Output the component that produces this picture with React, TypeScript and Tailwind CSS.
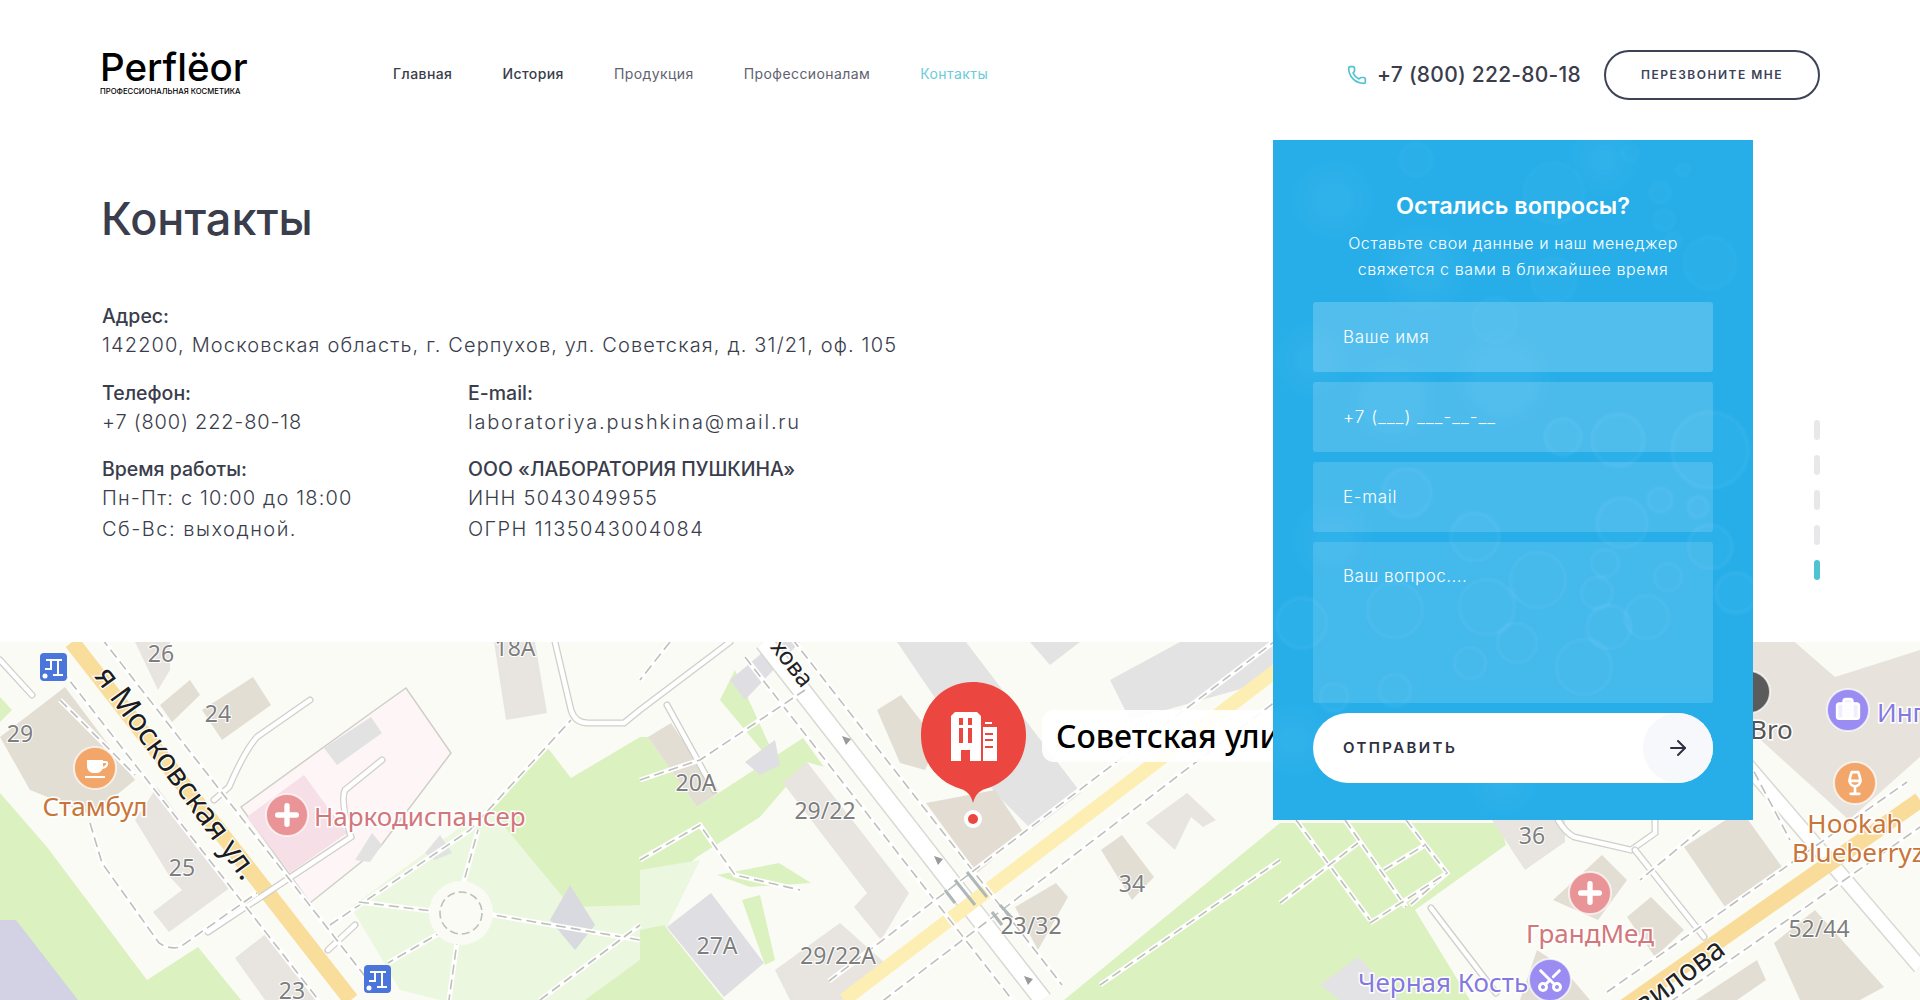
import React from 'react';
import { ArrowRight, Briefcase, Phone, Plus, Scissors, Wine } from 'lucide-react';

const navItems = [
  { label: 'Главная', cls: 'text-[#3a3d4b] font-medium' },
  { label: 'История', cls: 'text-[#3a3d4b] font-medium' },
  { label: 'Продукция', cls: 'text-[#5f6270]' },
  { label: 'Профессионалам', cls: 'text-[#5f6270]' },
  { label: 'Контакты', cls: 'text-[#6ccbd8]' },
];

// [x, y, r] in panel coordinates
const bubbles = [
  [437, 310, 38], [349, 383, 25], [265, 440, 28], [214, 467, 28], [122, 470, 28], [29, 483, 25],
  [332, 423, 14], [425, 367, 10], [395, 437, 14], [324, 453, 16], [336, 487, 22], [374, 477, 22],
  [244, 503, 20], [311, 527, 28], [197, 523, 16], [122, 550, 16], [61, 557, 14], [437, 407, 22],
  [387, 360, 12], [290, 297, 18], [345, 300, 26], [202, 397, 24], [134, 353, 24], [463, 453, 20],
];

const topBubbles = [
  [437, 123, 26], [281, 53, 30], [387, 53, 10], [357, 13, 8], [391, 80, 10], [281, 140, 22],
  [222, 180, 22], [143, 20, 16], [410, 30, 6], [400, 100, 7],
];

const blotches = [
  [60, 60, 30], [150, 130, 34], [40, 220, 28], [120, 260, 36], [60, 400, 30], [330, 20, 24], [230, 240, 40], [20, 600, 26], [230, 640, 24],
];

const buildings: [string, string][] = [
  ['0,737 65,687 135,780 92,815 30,790', '#e3ded4'],
  ['135,642 170,642 170,670 158,690', '#e8e5e0'],
  ['160,705 190,680 200,695 172,722', '#e3ded4'],
  ['202,710 253,677 271,705 222,740', '#e3ded4'],
  ['135,820 157,787 231,887 169,932 153,912 182,890 170,877', '#e8e5e0'],
  ['235,958 267,933 322,1000 265,1000', '#e8e5e0'],
  ['494,642 535,642 547,713 506,720', '#e8e5e0'],
  ['877,710 901,695 938,743 925,770 900,763', '#e3ded4'],
  ['926,803 995,790 1024,833 977,873', '#e3dcd2'],
  ['783,783 807,762 909,893 893,920 881,940 854,907 867,893', '#e8e5e0'],
  ['648,737 671,723 718,793 697,807', '#e3ded4'],
  ['667,927 711,893 764,963 724,997', '#dfdfe3'],
  ['775,970 840,923 885,963 855,1000 790,1000', '#e8e5e0'],
  ['1101,850 1122,835 1154,877 1132,900', '#e3ded4'],
  ['1015,907 1056,883 1068,897 1038,950', '#e3ded4'],
  ['1146,823 1187,793 1216,820 1203,827 1191,817 1175,850', '#e8e5e0'],
  ['1492,820 1565,820 1565,842 1525,870', '#e8e5e0'],
  ['1553,900 1602,855 1627,880 1598,920', '#e3ded4'],
  ['1627,917 1651,897 1684,930 1655,957', '#e3ded4'],
  ['1684,847 1741,810 1782,867 1725,907', '#e3ded4'],
  ['1774,943 1815,910 1884,987 1860,1000 1800,1000', '#e3ded4'],
  ['1696,1000 1757,960 1766,980 1737,1000', '#e3ded4'],
  ['1537,950 1560,965 1590,1000 1520,1000', '#e3ded4'],
  ['1753,642 1795,642 1835,677 1920,650 1920,757 1849,820 1753,733', '#e7e3dc'],
  ['730,680 775,642 800,642 745,700', '#dfdfe3'],
  ['745,762 775,740 780,765 760,775', '#dfdfe3'],
];

const dashed = [
  'M92 626L371 984', 'M52 658L331 1016', 'M783 627L1062 985', 'M745 657L1024 1015',
  'M859 1019L1305 679', 'M829 981L1275 641', 'M1633 1028L1933 818', 'M1607 992L1907 782',
  'M90 823L102 863L159 943Q170 950 180 947L257 893',
  'M330 925L470 830L571 720', 'M359 902L440 912', 'M482 913L640 940', 'M461 892L478 830',
  'M445 930L388 963', 'M458 935L449 1000', 'M540 1000L640 925', 'M640 780L700 760L805 690',
  'M640 860L700 825L735 875L800 890', 'M670 642L640 680', 'M1296 820L1370 920', 'M1345 820L1406 907',
  'M1406 820L1447 873L1410 905', 'M1280 903L1358 843', 'M1384 870L1425 845', 'M1370 923L1447 873',
  'M1100 985L1280 860', 'M1700 830L1640 880', 'M1740 745L1790 840', 'M60 700L120 760L135 775',
];

const drives = [
  'M310 700L257 737Q245 750 229 787L214 800', 'M382 760L345 790Q340 800 351 837L208 932',
  'M555 642L571 710Q575 723 588 723L624 723L640 710L730 642', 'M1558 820Q1565 832 1574 837L1631 850L1655 833L1655 820',
  'M1635 850L1704 937', 'M1431 908L1496 993', 'M667 705L714 790', 'M0 660L32 695', 'M328 950L355 925',
];

const numbers: [string, number, number][] = [
  ['26', 161, 662], ['24', 218, 722], ['29', 20, 742], ['25', 182, 876], ['23', 292, 999], ['18А', 515, 656],
  ['20А', 696, 791], ['29/22', 825, 819], ['27А', 717, 954], ['29/22А', 838, 964], ['34', 1132, 892],
  ['23/32', 1031, 934], ['36', 1532, 844], ['52/44', 1819, 937],
];

const MapLabel = ({ x, y, color, anchor = 'middle', children }: { x: number; y: number; color: string; anchor?: 'middle' | 'start'; children: React.ReactNode }) => (
  <text x={x} y={y} fill={color} textAnchor={anchor} stroke="#fff" strokeWidth="3" className="[paint-order:stroke] font-['Noto_Sans',sans-serif] text-[26px]">
    {children}
  </text>
);

const MapDot = ({ x, y, color, children }: { x: number; y: number; color: string; children?: React.ReactNode }) => (
  <g>
    <circle cx={x} cy={y} r="21" fill={color} stroke="#fff" strokeOpacity="0.7" strokeWidth="2" />
    {children}
  </g>
);

const TransitIcon = ({ x, y }: { x: number; y: number }) => (
  <g>
    <rect x={x} y={y} width="27" height="28" rx="4" fill="#4a76dc" />
    <path d={`M${x + 6} ${y + 7}H${x + 22}M${x + 11} ${y + 7}V${y + 16}H${x + 5}M${x + 18} ${y + 7}V${y + 22}M${x + 13} ${y + 22}H${x + 23}`} stroke="#fff" strokeWidth="2" fill="none" />
    <circle cx={x + 5} cy={y + 23} r="2.5" fill="#fff" />
  </g>
);

const MapView = () => (
  <svg viewBox="0 642 1920 358" className="block h-[358px] w-[1920px]">
    <rect x="0" y="642" width="1920" height="358" fill="#fbfbf6" />
    {/* green */}
    <polygon points="0,793 47,847 147,980 198,947 241,1000 0,1000" fill="#dcf1c0" />
    <polygon points="0,697 12,710 0,722" fill="#dcf1c0" />
    <polygon points="0,920 16,920 78,1000 0,1000" fill="#d3d2e4" />
    <polygon points="351,907 488,807 571,907 640,870 640,1000 440,1000 400,990" fill="#ebf7df" />
    <polygon points="488,807 547,747 571,778 640,737 648,737 697,807 803,738 824,767 807,762 760,817 697,857 640,905 571,907" fill="#dcf1c0" />
    <polygon points="640,870 700,860 667,927 640,930" fill="#ebf7df" />
    <polygon points="640,930 664,925 724,1000 640,1000" fill="#dcf1c0" />
    <polygon points="717,875 779,863 811,883 750,887" fill="#dcf1c0" />
    <polygon points="742,900 760,895 775,960 765,965" fill="#dcf1c0" />
    <polygon points="1064,1000 1280,823 1500,823 1506,845 1415,910 1470,1000" fill="#dcf1c0" />
    <polygon points="720,700 735,670 790,790 778,770" fill="#dcf1c0" />
    <polygon points="1358,957 1400,1000 1340,1000 1320,985" fill="#e3e3e6" />
    <polygon points="585,1000 640,960 640,1000" fill="#dcf1c0" />
    {/* hospital */}
    <polygon points="241,807 375,710 406,688 451,753 380,847 310,903" fill="#fdf5f6" stroke="#cfcfca" strokeWidth="1.5" />
    <polygon points="247,817 304,775 320,797 347,833 290,873" fill="#f6dfe6" />
    <polygon points="324,748 371,717 382,733 337,765" fill="#e2e2e2" />
    <polygon points="355,860 372,833 382,845 370,862" fill="#e2e2e2" />
    <polygon points="425,853 440,835 452,853 435,860" fill="#e2e2e2" />
    <polygon points="550,920 570,885 595,925 575,950" fill="#d9d9e0" />
    <polygon points="897,642 966,642 1081,793 1032,830 995,793 950,720" fill="#e3e3e3" />
    <polygon points="1030,642 1080,642 1050,665" fill="#e3e3e3" />
    <polygon points="1110,680 1180,642 1273,642 1273,680 1130,720" fill="#e3e3e3" />
    {buildings.map(([points, fill]) => (
      <polygon key={points} points={points} fill={fill} />
    ))}
    <polygon points="1795,642 1850,642 1835,665 1825,668" fill="#fbfbf6" />
    {/* roads */}
    <path d="M764 642L1043 1000" stroke="#d8d8d4" strokeWidth="20" fill="none" />
    <path d="M764 642L1043 1000" stroke="#fff" strokeWidth="17" fill="none" />
    <path d="M1700 710L1920 967" stroke="#d8d8d4" strokeWidth="16" fill="none" />
    <path d="M1700 710L1920 967" stroke="#fff" strokeWidth="13" fill="none" />
    <path d="M72 642L351 1000" stroke="#f9dd9b" strokeWidth="16" fill="none" />
    <path d="M844 1000L1500 500" stroke="#fdeeb4" strokeWidth="14" fill="none" />
    <path d="M1620 1010L1920 800" stroke="#f9dc9a" strokeWidth="16" fill="none" />
    {drives.map((d) => (
      <g key={d}>
        <path d={d} stroke="#cfcfca" strokeWidth="7" strokeLinecap="round" fill="none" />
        <path d={d} stroke="#fff" strokeWidth="4.5" strokeLinecap="round" fill="none" />
      </g>
    ))}
    {dashed.map((d) => (
      <g key={d}>
        <path d={d} stroke="#fff" strokeWidth="5" fill="none" />
        <path d={d} stroke="#bfc0bc" strokeWidth="1.6" strokeDasharray="10 5" fill="none" />
      </g>
    ))}
    <circle cx="461" cy="913" r="32" fill="#fbfbf6" />
    <circle cx="461" cy="913" r="21" fill="#fbfbf6" stroke="#bfc0bc" strokeWidth="1.6" strokeDasharray="8 4" />
    {/* crossings */}
    <path d="M955 880L975 905M967 872L987 897M992 912L1002 925M1000 905L1012 918M945 890L955 903" stroke="#aeb8b8" strokeWidth="3" fill="none" />
    <path d="M846 745l-4 -9l9 3zM938 865l-4 -9l9 3zM1028 985l-4 -9l9 3z" fill="#9a9a9a" />
    {/* labels */}
    {numbers.map(([t, x, y]) => (
      <text key={t} x={x} y={y} textAnchor="middle" fill="#7e7e7e" stroke="#fff" strokeWidth="2" className="[paint-order:stroke] font-['Noto_Sans',sans-serif] text-[23px]">
        {t}
      </text>
    ))}
    <text transform="translate(243 882) rotate(54)" textAnchor="end" className="font-['Noto_Sans',sans-serif] text-[31px]" fill="#1c1c1c" stroke="#fff" strokeWidth="2.5" style={{ paintOrder: 'stroke' }}>
      я Московская ул.
    </text>
    <text transform="translate(802 689) rotate(52)" textAnchor="end" className="font-['Noto_Sans',sans-serif] text-[24px]" fill="#222" stroke="#fff" strokeWidth="3" style={{ paintOrder: 'stroke' }}>
      хова
    </text>
    <text transform="translate(1727 953) rotate(-37)" textAnchor="end" className="font-['Noto_Sans',sans-serif] text-[30px]" fill="#222" stroke="#fff" strokeWidth="3" style={{ paintOrder: 'stroke' }}>
      Вавилова
    </text>

    <TransitIcon x={40} y={653} />
    <TransitIcon x={364} y={965} />

    <MapDot x={95} y={768} color="#f2a66a">
      <path d="M87 760h16v6c0 4 -3 7 -6 7h-4c-3 0 -6 -3 -6 -7z" fill="#fff" />
      <path d="M103 762h3c2 0 2 5 -4 6" stroke="#fff" strokeWidth="2" fill="none" />
      <path d="M85 777h20" stroke="#fff" strokeWidth="2" />
    </MapDot>
    <MapLabel x={95} y={816} color="#c8753a">Стамбул</MapLabel>

    <MapDot x={287} y={815} color="#e99496">
      <Plus x={271} y={799} width={32} height={32} color="#fff" strokeWidth={4} />
    </MapDot>
    <MapLabel x={314} y={826} color="#d2777b" anchor="start">Наркодиспансер</MapLabel>

    <MapDot x={1590} y={893} color="#e99496">
      <Plus x={1574} y={877} width={32} height={32} color="#fff" strokeWidth={4} />
    </MapDot>
    <MapLabel x={1590} y={943} color="#d2777b">ГрандМед</MapLabel>

    <MapDot x={1550} y={980} color="#9a8cf0">
      <Scissors x={1536} y={966} width={28} height={28} color="#fff" strokeWidth={2.5} transform="rotate(-90 1550 980)" />
    </MapDot>
    <MapLabel x={1358} y={992} color="#8579e0" anchor="start">Черная Кость</MapLabel>

    <MapDot x={1749} y={692} color="#5b5b5b" />
    <MapLabel x={1750} y={739} color="#555" anchor="start">Bro</MapLabel>
    <MapDot x={1848} y={710} color="#9a8cf0">
      <Briefcase x={1835} y={697} width={26} height={26} color="#fff" fill="#fff" fillOpacity={0.85} strokeWidth={2.5} />
    </MapDot>
    <MapLabel x={1877} y={722} color="#8579e0" anchor="start">Инг</MapLabel>
    <MapDot x={1855} y={783} color="#f2a66a">
      <Wine x={1842} y={770} width={26} height={26} color="#fff" strokeWidth={2.5} />
    </MapDot>
    <MapLabel x={1855} y={833} color="#c8753a">Hookah</MapLabel>
    <MapLabel x={1792} y={862} color="#c8753a" anchor="start">Blueberryz</MapLabel>

    {/* pin */}
    <circle cx="973" cy="819" r="9" fill="#fff" />
    <circle cx="973" cy="819" r="5" fill="#ec4640" />
    <path d="M921 735c0 -30 23 -53 52 -53c29 0 53 23 53 53c0 29 -20 48 -41 54c-6 2 -10 6 -12 14c-2 -8 -6 -12 -12 -14c-21 -6 -40 -25 -40 -54z" fill="#ec4640" />
    <path d="M951 716l4 -4h22l4 4v45h-11v-11h-9v11h-10z" fill="#fff" />
    <path d="M983 727h14v34h-14z" fill="#fff" />
    <path d="M985 722h7v2h-7z" fill="#fff" />
    <path d="M959 718h4v7h-4zM968 718h4v7h-4zM959 728h4v15h-4zM968 728h4v15h-4zM985 733h8v2h-8zM985 739h8v2h-8zM985 746h8v2h-8z" fill="#ec4640" />
    <rect x="1042" y="710" width="300" height="52" rx="12" fill="#fff" fillOpacity="0.92" />
    <text x="1056" y="748" fill="#000" className="font-['Noto_Sans',sans-serif] text-[32px] font-medium">Советская улица</text>
  </svg>
);

const Field = ({ placeholder, cls }: { placeholder: string; cls: string }) => (
  <input
    placeholder={placeholder}
    className={`h-[70px] w-full rounded-[3px] px-[30px] text-[17px] font-light text-white outline-none placeholder:text-white ${cls}`}
  />
);

const FormPanel = () => (
  <div className="absolute left-[1273px] top-[140px] h-[680px] w-[480px] overflow-hidden bg-[#27aee9] px-10">
    <svg viewBox="0 0 480 680" className="absolute inset-0 h-full w-full">
      <defs>
        <filter id="soft">
          <feGaussianBlur stdDeviation="1.2" />
        </filter>
        <filter id="softer">
          <feGaussianBlur stdDeviation="8" />
        </filter>
      </defs>
      <g filter="url(#softer)">
        {blotches.map(([x, y, r]) => (
          <circle key={`${x}-${y}`} cx={x} cy={y} r={r} fill="#fff" fillOpacity="0.035" />
        ))}
      </g>
      <g filter="url(#soft)">
        {bubbles.map(([x, y, r]) => (
          <circle key={`${x}-${y}`} cx={x} cy={y} r={r} fill="#fff" fillOpacity="0.02" stroke="#fff" strokeOpacity="0.05" strokeWidth="3" />
        ))}
        {topBubbles.map(([x, y, r]) => (
          <circle key={`${x}-${y}`} cx={x} cy={y} r={r} fill="#fff" fillOpacity="0.015" stroke="#fff" strokeOpacity="0.03" strokeWidth="2" />
        ))}
      </g>
    </svg>
    <div className="relative flex flex-col">
      <h2 className="mt-[50px] text-center text-[23.5px] font-semibold leading-8 text-white">Остались вопросы?</h2>
      <p className="mt-[8px] text-center text-[16px] font-light leading-[26px] tracking-[0.6px] text-white">
        Оставьте свои данные и наш менеджер
        <br />
        свяжется с вами в ближайшее время
      </p>
      <div className="mt-[20px] flex flex-col gap-2.5">
        <Field placeholder="Ваше имя" cls="bg-white/20 tracking-[0.7px]" />
        <Field placeholder="+7 (___) ___-__-__" cls="bg-white/17 tracking-[1.1px]" />
        <Field placeholder="E-mail" cls="bg-white/15 tracking-[0.7px]" />
        <textarea
          placeholder="Ваш вопрос...."
          className="h-[161px] w-full resize-none rounded-[3px] bg-white/13 px-[30px] py-[22px] text-[17px] font-light tracking-[0.5px] text-white outline-none placeholder:text-white"
        />
        <button className="flex h-[70px] items-center justify-between overflow-hidden rounded-full bg-white pl-[30px] text-[15px] font-semibold tracking-[2.4px] text-[#2e3140]">
          ОТПРАВИТЬ
          <span className="flex h-[70px] w-[70px] items-center justify-center rounded-l-[50%] bg-[#f6f8fb]">
            <ArrowRight size={24} strokeWidth={2} />
          </span>
        </button>
      </div>
    </div>
  </div>
);

const Label = ({ children }: { children: React.ReactNode }) => (
  <div className="text-[19.5px] font-medium leading-[28px] text-[#3a3d4b]">{children}</div>
);

const Value = ({ spacing = 'tracking-[1.15px]', children }: { spacing?: string; children: React.ReactNode }) => (
  <div className={`text-[20px] font-light leading-[31px] text-[#3a3d4b] ${spacing}`}>{children}</div>
);

export default function App() {
  return (
    <div className="relative h-[1000px] w-full overflow-hidden bg-white font-['Inter',sans-serif]">
      <header className="flex h-[146px] items-center pl-[100px] pr-[100px]">
        <div className="w-[293px]">
          <div className="text-[38.5px] font-medium leading-[36px] text-black">Perflëor</div>
          <div className="mt-[2px] text-[7.7px] font-medium leading-[10px] text-black">ПРОФЕССИОНАЛЬНАЯ КОСМЕТИКА</div>
        </div>
        <nav className="flex gap-[50px] text-[14px] tracking-[0.42px]">
          {navItems.map((item) => (
            <a key={item.label} className={item.cls}>
              {item.label}
            </a>
          ))}
        </nav>
        <div className="ml-auto mt-[3px] flex items-center">
          <Phone size={20} strokeWidth={2} className="text-[#4fc3d2]" />
          <span className="ml-[10px] text-[21px] font-medium tracking-[0.25px] text-[#3a3d4b]">+7 (800) 222-80-18</span>
          <button className="ml-[23px] h-[50px] w-[216px] rounded-full border-2 border-[#3c4257] text-[12px] font-semibold tracking-[1.5px] text-[#3c4257]">
            ПЕРЕЗВОНИТЕ МНЕ
          </button>
        </div>
      </header>

      <main className="h-[496px] pl-[101px] pt-[45px]">
        <h1 className="text-[45px] font-medium leading-14 text-[#3a3d4b]">Контакты</h1>
        <div className="mt-[55px] pl-[1px]">
          <Label>Адрес:</Label>
          <Value>142200, Московская область, г. Серпухов, ул. Советская, д. 31/21, оф. 105</Value>
        </div>
        <div className="mt-[18px] grid grid-cols-[366px_1fr] gap-y-[17px] pl-[1px]">
          <div>
            <Label>Телефон:</Label>
            <Value spacing="tracking-[0.8px]">+7 (800) 222-80-18</Value>
          </div>
          <div>
            <Label>E-mail:</Label>
            <Value spacing="tracking-[1.8px]">laboratoriya.pushkina@mail.ru</Value>
          </div>
          <div>
            <Label>Время работы:</Label>
            <Value>Пн-Пт: с 10:00 до 18:00</Value>
            <Value spacing="tracking-[1.5px]">Сб-Вс: выходной.</Value>
          </div>
          <div>
            <Label>ООО «ЛАБОРАТОРИЯ ПУШКИНА»</Label>
            <Value spacing="tracking-[1.3px]">ИНН 5043049955</Value>
            <Value spacing="tracking-[1.4px]">ОГРН 1135043004084</Value>
          </div>
        </div>
      </main>

      <MapView />
      <FormPanel />

      <div className="absolute right-[100px] top-[420px] flex flex-col gap-[15px]">
        <span className="h-5 w-1.5 rounded-sm bg-[#e8e8ea]" />
        <span className="h-5 w-1.5 rounded-sm bg-[#e8e8ea]" />
        <span className="h-5 w-1.5 rounded-sm bg-[#e8e8ea]" />
        <span className="h-5 w-1.5 rounded-sm bg-[#e8e8ea]" />
        <span className="h-5 w-1.5 rounded-sm bg-[#4fc3d2]" />
      </div>
    </div>
  );
}
